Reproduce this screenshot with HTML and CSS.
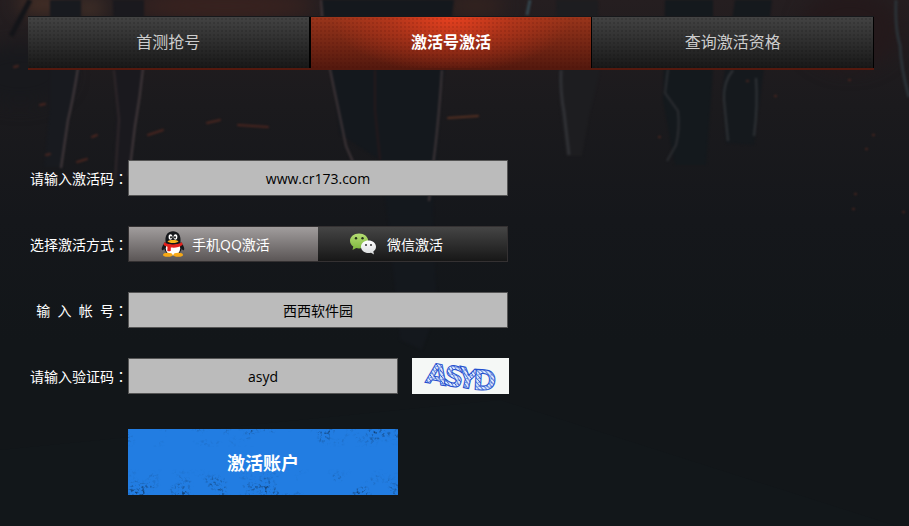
FILE: index.html
```html
<!DOCTYPE html>
<html lang="zh-CN">
<head>
  <meta charset="UTF-8">
  <meta name="viewport" content="width=device-width, initial-scale=1.0">
  <title>激活号激活</title>
  <link rel="stylesheet" href="styles.css">
</head>
<body>
  <!-- battlefield backdrop -->
  <svg class="backdrop" viewBox="0 0 909 526" preserveAspectRatio="xMidYMin slice" aria-hidden="true">
    <defs>
      <linearGradient id="ground" x1="0" y1="0" x2="0" y2="1">
        <stop offset="0" stop-color="#251e20"/>
        <stop offset="0.2" stop-color="#1b1a1d"/>
        <stop offset="0.42" stop-color="#15171b"/>
        <stop offset="0.65" stop-color="#121619"/>
        <stop offset="1" stop-color="#121619"/>
      </linearGradient>
      <filter id="soft" x="-20%" y="-20%" width="140%" height="140%" color-interpolation-filters="sRGB"><feGaussianBlur stdDeviation="1.2"/></filter>
      <filter id="haze" x="-50%" y="-100%" width="200%" height="300%" color-interpolation-filters="sRGB"><feGaussianBlur stdDeviation="9"/></filter>
    </defs>
    <rect width="909" height="526" fill="url(#ground)"/>
    <g filter="url(#haze)">
      <ellipse cx="45" cy="4" rx="28" ry="9" fill="#4b3227"/>
      <ellipse cx="90" cy="8" rx="16" ry="8" fill="#493429"/>
      <ellipse cx="225" cy="6" rx="90" ry="16" fill="#38221f"/>
      <ellipse cx="475" cy="6" rx="30" ry="10" fill="#35231f"/>
      <ellipse cx="850" cy="30" rx="50" ry="40" fill="#24191b"/>
      <ellipse cx="20" cy="75" rx="50" ry="30" fill="#18191d"/>
    </g>
    <g filter="url(#soft)">
      <path d="M50 0h31v68l-12 55-8 44H44l6-60z" fill="#181a1f"/>
      <path d="M113 0h31v65l-8 60-6 55h-16l2-75z" fill="#1a191e"/>
      <path d="M322 0h132l-12 90-9 120 4 100-15 40-22-10-12-120-8-60-40-26z" fill="#14181d"/>
      <path d="M556 0h42l2 72-10 40-8 44h-16l-6-50z" fill="#1d1d20"/>
      <path d="M665 0h48v70l-7 95h-31l-12-65z" fill="#14191d"/>
      <path d="M735 0h37l-9 75-9 70-28-2-4-52z" fill="#15191d"/>
      <g fill="none">
        <path d="M30 0L11 36" stroke="#141519" stroke-width="5"/>
        <path d="M78 68Q73 100 68 120l-7 48M143 68q-3 30-8 58l-6 50" stroke="#443a3d" stroke-width="2"/>
        <path d="M114 70l5 50-4 60" stroke="#30282b" stroke-width="2"/>
        <path d="M321 0q2 40 10 74l15 72 7 16M442 70q-4 60-9 95l-4 36" stroke="#3f3639" stroke-width="2"/>
        <path d="M375 70v40l5 50" stroke="#25191c" stroke-width="2"/>
        <path d="M530 0l-3 15" stroke="#34464e" stroke-width="3"/>
        <path d="M561 70q-1 22 3 42l5 43" stroke="#303135" stroke-width="3"/>
        <path d="M668 69l-3 24 13 18q2 18-2 34l-9 16" stroke="#2c2e32" stroke-width="2"/>
        <path d="M733 70q-10 12-9 30l4 41M756 78q2 28-2 58" stroke="#303337" stroke-width="2"/>
        <path d="M896 0q-1 30 4 45 1 24 9 52" stroke="#2b3237" stroke-width="3"/>
      </g>
      <g stroke="#6e2f22" stroke-width="2" stroke-linecap="round" opacity=".6">
        <path d="M448 118l30-2" stroke="#804126"/>
        <path d="M148 135l15-5M207 123l13-3M238 125l30 2M14 67l4-1M40 105l5-1M92 137l5-2M77 162l10-3M46 155l4-1"/>
        <path d="M747 81h1M849 80h1M775 96h1M873 135h1M866 149h1M659 137h1M855 194h1M853 209h1M903 212h1"/>
      </g>
    </g>
    <path d="M500 400l409 130H0v-80z" fill="#12181c" opacity=".5"/>
  </svg>

  <main class="page">
    <nav class="tabs">
      <a class="tab" href="#grab">首测抢号</a>
      <a class="tab active" href="#activate" aria-current="page">激活号激活</a>
      <a class="tab" href="#query">查询激活资格</a>
    </nav>

    <form class="form">
      <div class="row">
        <label class="name" for="code">请输入激活码<span class="colon" lang="zh-TW">：</span></label>
        <input class="field" type="text" id="code" value="www.cr173.com">
      </div>

      <div class="row" role="radiogroup" aria-labelledby="way">
        <span class="name" id="way">选择激活方式<span class="colon" lang="zh-TW">：</span></span>
        <div class="ways">
          <input type="radio" name="way" id="way-qq" checked>
          <label class="way" for="way-qq">
            <svg class="icon qq" viewBox="0 0 24 26" aria-hidden="true">
              <path d="M4 11C2 14 0 17 1 19c1 1 2-1 3-2M20 11c2 3 4 6 3 8-1 1-2-1-3-2" fill="#15171b"/>
              <ellipse cx="12" cy="16" rx="9" ry="8.5" fill="#15171b"/>
              <ellipse cx="12" cy="17.5" rx="7.2" ry="7" fill="#fff"/>
              <path d="M4.500 10C4 4 7 .3 12 .3S20 4 19.500 10c0 3-3 4-7.500 4s-7.500-1-7.500-4z" fill="#15171b"/>
              <ellipse cx="9.500" cy="6" rx="1.900" ry="2.800" fill="#fff"/>
              <ellipse cx="14.500" cy="6" rx="1.900" ry="2.800" fill="#fff"/>
              <ellipse cx="10" cy="6.300" rx=".8" ry="1.300" fill="#111"/>
              <ellipse cx="14" cy="6.300" rx=".8" ry="1.300" fill="#111"/>
              <path d="M6.500 10.300c2-1.600 9-1.600 11 0-1 2.400-10 2.400-11 0z" fill="#f7b51c"/>
              <path d="M3.200 11.200c4.500 3 13 3 17.600 0l1 2.500c-4 3-8 3.200-12 2.800v3.200c-1 .8-2.400.7-3.500.2l.2-4.200c-1.600-.5-3-1-4-2z" fill="#e3211c"/>
              <ellipse cx="6.800" cy="23.800" rx="4.800" ry="2" fill="#f7a916"/>
              <ellipse cx="17.200" cy="23.800" rx="4.800" ry="2" fill="#f7a916"/>
            </svg>
            手机QQ激活
          </label>
          <input type="radio" name="way" id="way-wx">
          <label class="way" for="way-wx">
            <svg class="icon wx" viewBox="0 0 26 22" aria-hidden="true">
              <defs>
                <linearGradient id="leaf" x1="0" y1="0" x2="0" y2="1"><stop stop-color="#b5dd73"/><stop offset="1" stop-color="#7db83d"/></linearGradient>
                <linearGradient id="snow" x1="0" y1="0" x2="0" y2="1"><stop stop-color="#fff"/><stop offset="1" stop-color="#d9dbdc"/></linearGradient>
              </defs>
              <path d="M9 .5C4 .5 0 3.600 0 7.800c0 2.500 1.300 4.500 3.300 5.800L2.500 17l3.700-2c1 .3 1.900.4 2.800.4 5 0 9.200-3.200 9.200-7.500S14 .5 9 .5z" fill="url(#leaf)"/>
              <circle cx="6" cy="5.300" r="1.200" fill="#25301b"/>
              <circle cx="12.500" cy="5.300" r="1.200" fill="#25301b"/>
              <path d="M18.500 7.500c-4.200 0-7.500 2.700-7.500 6.300s3.300 6.300 7.500 6.300c.9 0 1.800-.1 2.500-.4l3 1.800-.7-2.900c1.700-1.100 2.700-2.800 2.700-4.800 0-3.600-3.300-6.300-7.500-6.300z" fill="url(#snow)"/>
              <circle cx="16" cy="12" r="1" fill="#333"/>
              <circle cx="21" cy="12" r="1" fill="#333"/>
            </svg>
            微信激活
          </label>
        </div>
      </div>

      <div class="row">
        <label class="name" for="account">输&nbsp;&nbsp;入&nbsp;&nbsp;帐&nbsp;&nbsp;号<span class="colon" lang="zh-TW">：</span></label>
        <input class="field" type="text" id="account" value="西西软件园">
      </div>

      <div class="row">
        <label class="name" for="verify">请输入验证码<span class="colon" lang="zh-TW">：</span></label>
        <input class="field short" type="text" id="verify" value="asyd">
        <svg class="captcha" viewBox="0 0 97 36" role="img" aria-label="ASYD">
          <defs>
            <pattern id="hatch" width="4" height="4" patternUnits="userSpaceOnUse">
              <rect width="4" height="4" fill="#dfe9fa"/>
              <path d="M0 0l4 4M2 0h2" stroke="#1e4fd0" stroke-width="1"/>
            </pattern>
          </defs>
          <rect width="97" height="36" fill="#f5f8f6"/>
          <g class="captcha-text">
            <text x="14" y="26" transform="rotate(10 24 18)">A</text>
            <text x="32" y="28" transform="rotate(14 40 18)">S</text>
            <text x="46" y="30" transform="rotate(12 54 20)">Y</text>
            <text x="61" y="32" transform="rotate(3 70 22)">D</text>
          </g>
        </svg>
      </div>

      <button class="submit" type="submit">
        <svg class="grunge" width="100%" height="100%" aria-hidden="true">
          <defs>
            <filter id="specks" x="0" y="0" width="100%" height="100%" color-interpolation-filters="sRGB">
              <feTurbulence type="fractalNoise" baseFrequency=".35" numOctaves="2" seed="8" result="fine"/>
              <feColorMatrix in="fine" values="0 0 0 0 .06  0 0 0 0 .2  0 0 0 0 .36  4 0 0 0 -2" result="dots"/>
              <feTurbulence type="fractalNoise" baseFrequency=".045" numOctaves="3" seed="3"/>
              <feColorMatrix values="0 0 0 0 0  0 0 0 0 0  0 0 0 0 0  0 4 0 0 -1.900" result="patches"/>
              <feComposite in="dots" in2="patches" operator="in"/>
            </filter>
            <linearGradient id="edge" x1="0" y1="0" x2="0" y2="1">
              <stop offset="0" stop-color="#fff"/>
              <stop offset=".28" stop-color="#000"/>
              <stop offset=".6" stop-color="#000"/>
              <stop offset="1" stop-color="#fff"/>
            </linearGradient>
            <mask id="edges"><rect width="100%" height="100%" fill="url(#edge)"/></mask>
          </defs>
          <g mask="url(#edges)"><rect width="100%" height="100%" filter="url(#specks)"/></g>
        </svg>
        <span class="submit-text">激活账户</span>
      </button>
    </form>
  </main>
</body>
</html>
```
FILE: styles.css
```css
* {
  box-sizing: border-box;
}
body {
  margin: 0;
  min-height: 100vh;
  background: #121619;
  color: #fff;
  font-family: "Open Sans", "Noto Sans CJK SC", sans-serif;
  font-size: 14px;
}
.backdrop {
  position: absolute;
  top: 0;
  left: 0;
  width: 100%;
  height: 100%;
  z-index: -1;
}
.page {
  padding: 16px 35px 30px 28px;
}

/* tabs */
.tabs {
  display: flex;
  border-top: 1px solid #17181b;
  border-bottom: 2px solid #54190e;
}
.tab {
  flex: 1;
  height: 51px;
  line-height: 50px;
  text-align: center;
  font-size: 16px;
  color: #ccc;
  text-decoration: none;
  border-right: 1px solid #000;
  background:
    radial-gradient(circle, rgba(0,0,0,0.12) 1px, transparent 1px) 0 0 / 4px 4px,
    linear-gradient(#434343, #181818);
}
.tab:first-child {
  border-right-width: 2px;
}
.tab.active {
  color: #fff;
  font-weight: bold;
  background:
    radial-gradient(circle, rgba(60,0,0,0.12) 1px, transparent 1px) 0 0 / 4px 4px,
    radial-gradient(ellipse 120px 56px at 50% 0, #e6401f, rgba(214,58,28,0.45) 50%, rgba(214,58,28,0)),
    linear-gradient(#9a351b, #54190e);
}

/* form */
.form {
  display: flex;
  flex-direction: column;
  gap: 30px;
  padding-top: 90px;
}
.row {
  display: flex;
  align-items: center;
  height: 36px;
}
.name {
  width: 100px;
  flex-shrink: 0;
  text-align: right;
  white-space: nowrap;
}
.colon {
  font-family: "Noto Sans CJK TC", sans-serif;
}
.field {
  width: 380px;
  height: 36px;
  padding: 0 8px;
  border: 1px solid #555;
  border-radius: 0;
  background: #bbb;
  color: #000;
  font-family: inherit;
  font-size: 14px;
  text-align: center;
}
.field.short {
  width: 270px;
}

.ways {
  position: relative;
  display: flex;
  width: 380px;
  height: 36px;
  border: 1px solid #343132;
}
.ways input {
  position: absolute;
  opacity: 0;
}
.way {
  flex: 1;
  display: flex;
  align-items: center;
  padding-left: 32px;
  background: linear-gradient(#454545, #171717);
  cursor: pointer;
}
.ways input:checked + .way {
  background: linear-gradient(#a19d9d, #5b5656);
}
.ways input:focus-visible + .way {
  outline: 1px solid #fff;
}
.icon {
  flex-shrink: 0;
}
.qq {
  width: 24px;
  height: 26px;
  margin-right: 7px;
}
.wx {
  width: 26px;
  height: 22px;
  margin-right: 11px;
}

.captcha {
  width: 97px;
  height: 36px;
  margin-left: 14px;
  overflow: visible;
}
.captcha-text {
  font-family: "DejaVu Sans", sans-serif;
  font-size: 28px;
  font-weight: bold;
  fill: url(#hatch);
  stroke: #2450cf;
  stroke-width: 1px;
}

.submit {
  position: relative;
  width: 270px;
  height: 66px;
  margin: 5px 0 0 100px;
  padding: 0;
  border: none;
  background: #227de2;
  color: #fff;
  font-family: inherit;
  font-size: 18px;
  font-weight: bold;
  cursor: pointer;
}
.grunge {
  position: absolute;
  top: 0;
  left: 0;
}
.submit-text {
  position: relative;
}
```
